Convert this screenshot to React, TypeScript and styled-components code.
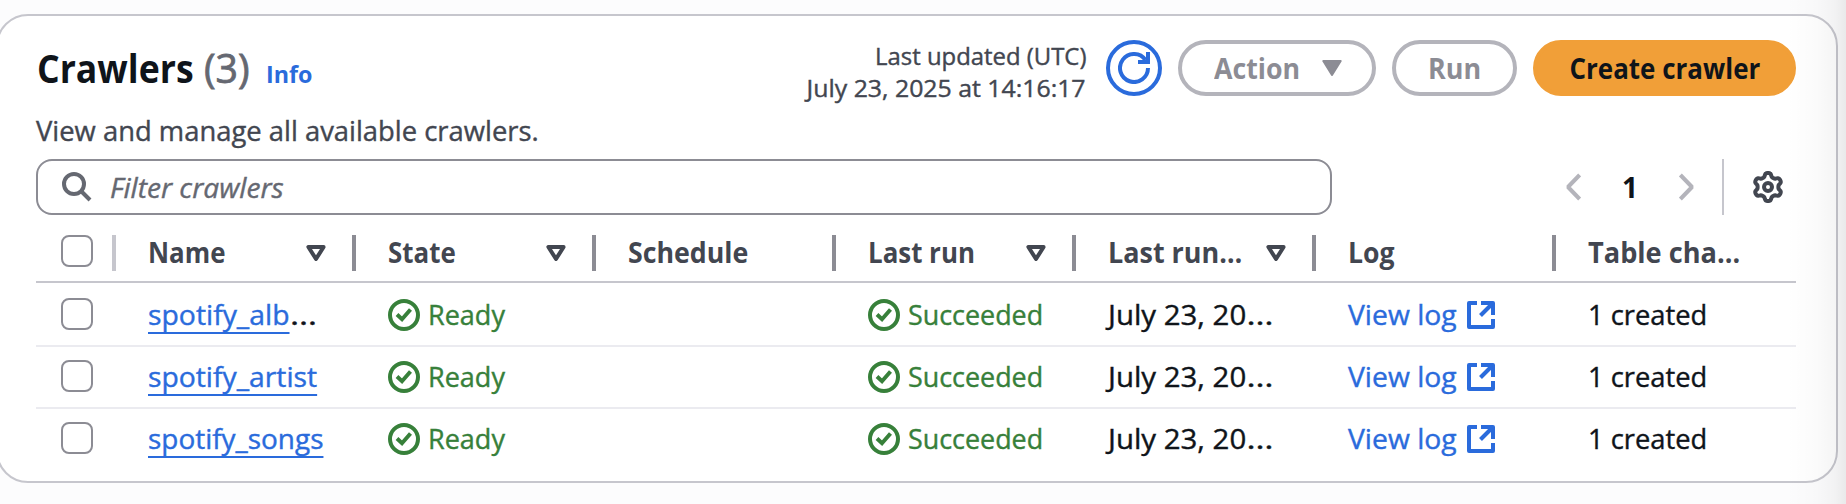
import React from "react";
import styled, { createGlobalStyle } from "styled-components";

const color = {
  ink: "#0f141a",
  heading: "#424650",
  muted: "#656871",
  disabled: "#8c8c94",
  control: "#8c8c94",
  disabledBorder: "#b4b4bb",
  line: "#c6c6cd",
  rowLine: "#ebebf0",
  blue: "#2a6bdc",
  green: "#37803a",
  orange: "#f19f38",
};

const GlobalStyle = createGlobalStyle`
  *, *::before, *::after { box-sizing: border-box; }
  html, body { margin: 0; padding: 0; }
  body {
    background: #fcfcfd;
    color: ${color.ink};
    font-family: "Open Sans", "Noto Sans", sans-serif;
    font-size: 28px;
    line-height: 40px;
    overflow: hidden;
  }
  svg { display: block; flex: none; }
`;

const Page = styled.main`
  position: relative;
  width: 1846px;
  height: 504px;
  padding-top: 14px;
  overflow: hidden;
  -webkit-text-stroke: 0.4px currentColor;
`;

const EdgeShade = styled.div`
  position: absolute;
  top: 0;
  right: 0;
  width: 60px;
  height: 100%;
  pointer-events: none;
  background: linear-gradient(to right, rgba(0, 0, 0, 0), rgba(0, 0, 0, 0.016) 50%, rgba(0, 0, 0, 0.04) 82%, rgba(0, 0, 0, 0.075));
`;

const Panel = styled.section`
  display: flex;
  flex-direction: column;
  width: 1842px;
  height: 469px;
  margin-left: -4px;
  padding: 24px 40px 0 38px;
  background: #fff;
  border: 2px solid ${color.line};
  border-radius: 32px;
`;

const Fit = styled.span<{ $x: number; $from?: string }>`
  display: inline-block;
  white-space: pre;
  transform: scaleX(${(p) => p.$x});
  transform-origin: ${(p) => p.$from ?? "left"} center;
`;

const Header = styled.header`
  display: flex;
  justify-content: space-between;
  align-items: flex-start;
  height: 119px;
`;

const Heading = styled.div`
  display: flex;
  flex-direction: column;
  padding-top: 4px;
`;

const TitleRow = styled.div`
  display: flex;
  align-items: baseline;
  height: 48px;
  padding-left: 1px;
  line-height: 48px;
`;

const Title = styled.h1`
  width: 167px;
  margin: 0;
  font-size: 40px;
  font-weight: 700;
  line-height: 48px;
  -webkit-text-stroke: 0;
`;

const Counter = styled.span`
  width: 62px;
  font-size: 40px;
  color: ${color.muted};
  -webkit-text-stroke: 0.8px currentColor;
`;

const InfoLink = styled.a`
  font-size: 24px;
  font-weight: 700;
  color: ${color.blue};
  -webkit-text-stroke: 0;
`;

const Description = styled.p`
  margin: 18px 0 0;
  color: ${color.heading};
`;

const Actions = styled.div`
  display: flex;
  align-items: flex-start;
  gap: 16px;
`;

const Updated = styled.div`
  display: flex;
  flex-direction: column;
  align-items: flex-end;
  margin-right: 4px;
  font-size: 24px;
  line-height: 32px;
  color: ${color.heading};
`;

const Button = styled.button<{ $kind: "primary" | "disabled" | "icon"; $width: number }>`
  display: flex;
  align-items: center;
  justify-content: center;
  width: ${(p) => p.$width}px;
  height: 56px;
  padding: 0;
  border: 4px solid
    ${(p) => ({ primary: color.orange, disabled: color.disabledBorder, icon: color.blue })[p.$kind]};
  border-radius: 28px;
  background: ${(p) => (p.$kind === "primary" ? color.orange : "#fff")};
  color: ${(p) => ({ primary: color.ink, disabled: color.disabled, icon: color.blue })[p.$kind]};
  font: inherit;
  font-weight: 700;
  line-height: 40px;
  -webkit-text-stroke: 0;
`;

const ActionLabel = styled.span`
  width: 108px;
  margin-left: 1px;
  text-align: left;
`;

const Tools = styled.div`
  display: flex;
  align-items: center;
  justify-content: space-between;
  height: 56px;
`;

const Search = styled.label`
  display: flex;
  align-items: center;
  width: 1296px;
  height: 56px;
  padding-left: 24px;
  gap: 18px;
  border: 2px solid ${color.control};
  border-radius: 16px;
  color: ${color.muted};
  font-style: italic;
`;

const Pager = styled.nav`
  display: flex;
  align-items: center;
  height: 56px;
`;

const PageNumber = styled.span`
  width: 98px;
  text-align: center;
  font-weight: 700;
  -webkit-text-stroke: 0;
`;

const Preferences = styled.div`
  display: flex;
  align-items: center;
  height: 56px;
  margin-left: 28px;
  padding: 0 12px 0 28px;
  border-left: 2px solid ${color.line};
  color: ${color.heading};
`;

const Row = styled.div<{ $head?: boolean; $last?: boolean; $height: number; $drop?: number }>`
  display: grid;
  grid-template-columns: 80px repeat(7, 240px);
  align-items: center;
  height: ${(p) => p.$height}px;
  padding-top: ${(p) => (p.$head ? 10 : 0)}px;
  padding-bottom: ${(p) => p.$drop ?? 0}px;
  border-bottom: ${(p) => (p.$last ? "0" : `2px solid ${p.$head ? color.line : color.rowLine}`)};
`;

const Cell = styled.div`
  display: flex;
  align-items: center;
  height: 40px;
  padding-left: 32px;
  white-space: nowrap;
`;

const SelectCell = styled.div<{ $head?: boolean }>`
  display: flex;
  align-items: flex-start;
  justify-content: space-between;
  height: ${(p) => (p.$head ? 36 : 32)}px;
  padding-left: 25px;
`;

const Checkbox = styled.span`
  width: 32px;
  height: 32px;
  border: 2px solid ${color.control};
  border-radius: 8px;
  background: #fff;
`;

const Separator = styled.span<{ $light?: boolean }>`
  width: 4px;
  height: 36px;
  background: ${(p) => (p.$light ? color.line : color.control)};
`;

const HeadCell = styled.div`
  display: grid;
  grid-template-columns: 158px 46px 4px;
  grid-template-rows: 36px;
  align-items: center;
  height: 36px;
  padding-left: 32px;
  color: ${color.heading};
  font-weight: 700;
  line-height: 34px;
  white-space: nowrap;
  -webkit-text-stroke: 0;
`;

const HeadLabel = styled.span`
  height: 36px;
`;

const NameLink = styled.a`
  color: ${color.blue};
  text-decoration: underline 2px;
  text-underline-offset: 7px;
  text-decoration-skip-ink: none;
`;

const Rest = styled.span`
  margin-left: 2px;
`;

const Status = styled.span`
  display: flex;
  align-items: center;
  gap: 8px;
  color: ${color.green};
  svg { position: relative; top: 1px; }
`;

const LogLink = styled.a`
  display: flex;
  align-items: center;
  color: ${color.blue};
  svg { position: relative; top: 1px; }
`;

const LogText = styled.span`
  width: 119px;
`;

const RefreshIcon = () => (
  <svg width="32" height="32" viewBox="0 0 32 32" fill="none" stroke="currentColor" strokeWidth="4">
    <path d="M30 16A14 14 0 1 1 27.5 8" />
    <path d="M30 0V10H20" />
  </svg>
);

const CaretIcon = () => (
  <svg width="20" height="16" viewBox="0 0 20 16" fill="currentColor" stroke="currentColor" strokeWidth="2" strokeLinejoin="round">
    <path d="M1.3 1H18.7L10 15Z" />
  </svg>
);

const SortIcon = () => (
  <svg width="20" height="16" viewBox="0 0 20 16" fill="none" stroke="currentColor" strokeWidth="4" strokeLinejoin="round">
    <path d="M2.4 2H17.6L10 14Z" />
  </svg>
);

const SearchIcon = () => (
  <svg width="30" height="30" viewBox="0 0 30 30" fill="none" stroke="currentColor" strokeWidth="4">
    <circle cx="12" cy="12" r="10" />
    <path d="M19 19L28 28" />
  </svg>
);

const ChevronIcon = ({ right }: { right?: boolean }) => (
  <svg width="15" height="28" viewBox="0 0 15 28" fill="none" stroke={color.disabledBorder} strokeWidth="4">
    <path d={right ? "M1.4 2L13 14L1.4 26" : "M13.6 2L2 14L13.6 26"} strokeLinejoin="bevel" />
  </svg>
);

const gearOutline =
  Array.from({ length: 120 }, (_, i) => {
    const a = (i / 120) * Math.PI * 2;
    const r = 12.2 + 1.8 * (Math.tanh(1.8 * Math.cos(6 * a)) / Math.tanh(1.8));
    return `${i ? "L" : "M"}${(16 + r * Math.sin(a)).toFixed(2)} ${(16 - r * Math.cos(a)).toFixed(2)}`;
  }).join("") + "Z";

const GearIcon = () => (
  <svg width="32" height="32" viewBox="0 0 32 32" fill="none" stroke="currentColor" strokeWidth="4" strokeLinejoin="round">
    <path d={gearOutline} />
    <circle cx="16" cy="16" r="4" />
  </svg>
);

const CheckIcon = () => (
  <svg width="32" height="32" viewBox="0 0 32 32" fill="none" stroke="currentColor" strokeWidth="4">
    <circle cx="16" cy="16" r="14" />
    <path d="M9 15.5L14 20.2L22.5 10.5" />
  </svg>
);

const ExternalIcon = () => (
  <svg width="28" height="28" viewBox="0 0 28 28" fill="none" stroke="currentColor" strokeWidth="4">
    <path d="M10 2H2V26H26V18" strokeLinejoin="round" />
    <path d="M14 2H26V14" strokeLinejoin="round" />
    <path d="M25 3L13.5 14.5" />
  </svg>
);

const columns = [
  { label: "Name", fit: 0.925, sort: true },
  { label: "State", fit: 0.925, sort: true },
  { label: "Schedule", fit: 0.955 },
  { label: "Last run", fit: 0.925, sort: true },
  { label: "Last run…", fit: 0.962, sort: true },
  { label: "Log", fit: 0.95 },
  { label: "Table cha…", fit: 0.97 },
];

const crawlers = [
  { name: "spotify_alb", fit: 1.012, rest: "…", height: 64, drop: 0 },
  { name: "spotify_artist", fit: 1.01, rest: "", height: 62, drop: 2 },
  { name: "spotify_songs", fit: 0.997, rest: "", height: 60, drop: 2 },
];

export default function App() {
  return (
    <>
      <GlobalStyle />
      <Page>
        <Panel>
          <Header>
            <Heading>
              <TitleRow>
                <Title><Fit $x={0.89}>Crawlers</Fit></Title>
                <Counter><Fit $x={0.98}>(3)</Fit></Counter>
                <InfoLink><Fit $x={0.97}>Info</Fit></InfoLink>
              </TitleRow>
              <Description><Fit $x={0.978}>View and manage all available crawlers.</Fit></Description>
            </Heading>
            <Actions>
              <Updated>
                <Fit $x={0.995} $from="right">Last updated (UTC)</Fit>
                <Fit $x={1.035} $from="right">July 23, 2025 at 14:16:17</Fit>
              </Updated>
              <Button $kind="icon" $width={56} aria-label="Refresh"><RefreshIcon /></Button>
              <Button $kind="disabled" $width={198}>
                <ActionLabel><Fit $x={0.955}>Action</Fit></ActionLabel>
                <CaretIcon />
              </Button>
              <Button $kind="disabled" $width={125}><Fit $x={0.96} $from="center">Run</Fit></Button>
              <Button $kind="primary" $width={263}><Fit $x={0.927} $from="center">Create crawler</Fit></Button>
            </Actions>
          </Header>
          <Tools>
            <Search><SearchIcon /><Fit $x={1.005}>Filter crawlers</Fit></Search>
            <Pager>
              <ChevronIcon />
              <PageNumber>1</PageNumber>
              <ChevronIcon right />
              <Preferences><GearIcon /></Preferences>
            </Pager>
          </Tools>
          <Row $head $height={68}>
            <SelectCell $head><Checkbox /><Separator $light /></SelectCell>
            {columns.map((c, i) => (
              <HeadCell key={c.label}>
                <HeadLabel><Fit $x={c.fit}>{c.label}</Fit></HeadLabel>
                <span>{c.sort && <SortIcon />}</span>
                {i < columns.length - 1 && <Separator />}
              </HeadCell>
            ))}
          </Row>
          {crawlers.map((c, i) => (
            <Row key={c.name} $height={c.height} $drop={c.drop} $last={i === crawlers.length - 1}>
              <SelectCell><Checkbox /></SelectCell>
              <Cell>
                <Fit $x={c.fit}><NameLink>{c.name}</NameLink></Fit>
                {c.rest && <Rest><Fit $x={1.24}>{c.rest}</Fit></Rest>}
              </Cell>
              <Cell><Status><CheckIcon /><Fit $x={0.965}>Ready</Fit></Status></Cell>
              <Cell />
              <Cell><Status><CheckIcon /><Fit $x={0.96}>Succeeded</Fit></Status></Cell>
              <Cell><Fit $x={1.05}>July 23, 20<Fit $x={1.18}>…</Fit></Fit></Cell>
              <Cell><LogLink><LogText><Fit $x={1.01}>View log</Fit></LogText><ExternalIcon /></LogLink></Cell>
              <Cell><Fit $x={0.975}>1 created</Fit></Cell>
            </Row>
          ))}
        </Panel>
        <EdgeShade />
      </Page>
    </>
  );
}
